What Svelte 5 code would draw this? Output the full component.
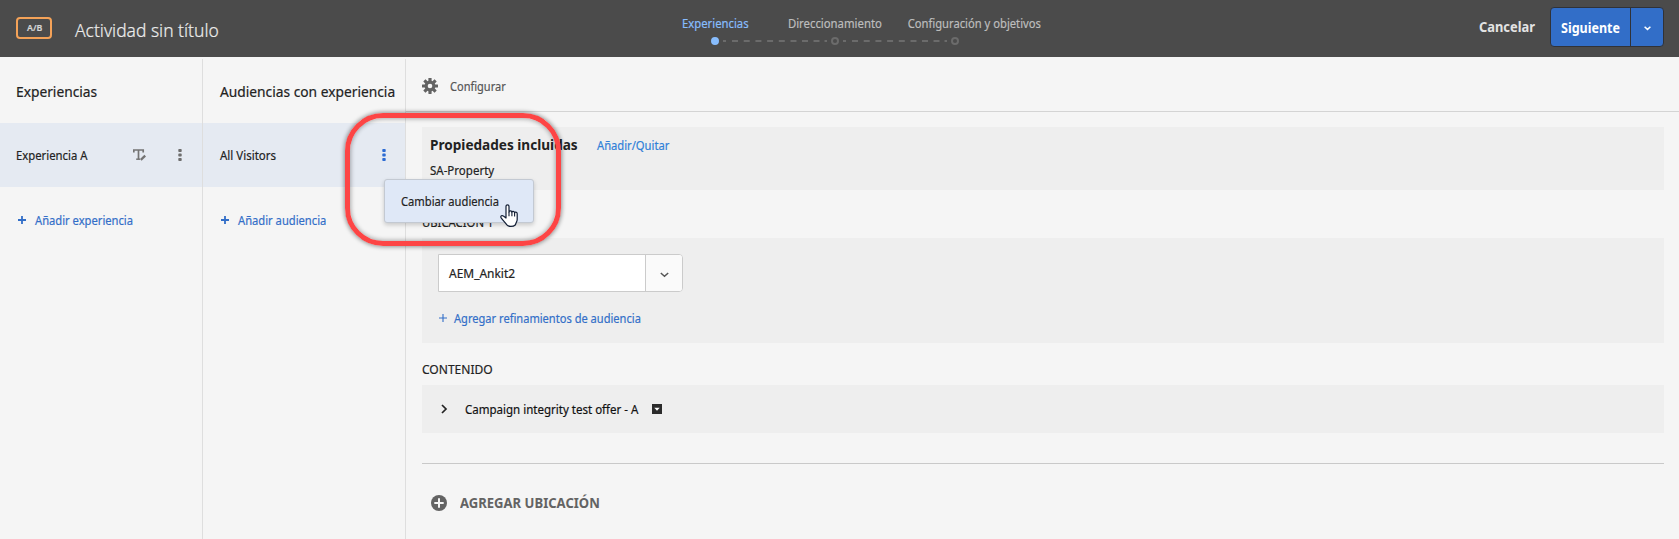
<script>
  const steps = [
    { label: 'Experiencias', k: 0.868, active: true },
    { label: 'Direccionamiento', k: 0.872 },
    { label: 'Configuración y objetivos', k: 0.862, wide: true }
  ];
</script>

{#snippet t(text, k)}<span class="t" style="transform: scaleX({k})">{text}</span>{/snippet}

{#snippet dots()}
  <svg class="dots" width="4" height="12" viewBox="0 0 4 12" fill="currentColor">
    <rect x=".3" y="0" width="3.4" height="3" rx=".8" /><rect x=".3" y="4.6" width="3.4" height="3" rx=".8" /><rect x=".3" y="9" width="3.4" height="3" rx=".8" />
  </svg>
{/snippet}

{#snippet plus(w)}
  <svg class="plus" width="8" height="8" viewBox="0 0 8 8" stroke="currentColor" stroke-width={w}><path d="M4 0v8M0 4h8" /></svg>
{/snippet}

<div class="page">
  <header>
    <div class="badge">{@render t('A/B', 0.98)}</div>
    <h1>{@render t('Actividad sin título', 0.918)}</h1>
    <ol>
      {#each steps as s}
        <li class:active={s.active} class:wide={s.wide}>
          <div class="label">{@render t(s.label, s.k)}</div>
          <i></i>
          {#if !s.wide}
            <svg class="dash" width="104" height="2"><path d="M0 1h3M9 1h6M20.700 1h6M32.400 1h6M44.100 1h6M55.800 1h6M67.500 1h6M79 1h6M90.500 1h6M101.500 1h2.500" stroke="#6b6b6b" stroke-width="2" /></svg>
          {/if}
        </li>
      {/each}
    </ol>
    <div class="cancel">{@render t('Cancelar', 0.92)}</div>
    <div class="next">
      <div class="go">{@render t('Siguiente', 0.895)}</div>
      <div class="more"><svg width="7" height="5" viewBox="0 0 7 5" fill="none" stroke="#fff" stroke-width="1.500"><path d="M.6.7 3.500 3.400 6.400.7" /></svg></div>
    </div>
  </header>

  <div class="body">
    <section class="col">
      <h2>{@render t('Experiencias', 0.918)}</h2>
      <div class="row">
        {@render t('Experiencia A', 0.87)}
        <svg class="rename" width="14" height="12" viewBox="0 0 14 12" fill="none" stroke="#747474">
          <path d="M.8 3.400V1h9.400v2.400M5.500 1v9.200" stroke-width="1.700" /><path d="M3.200 10.200h3.800" stroke-width="1.500" /><path d="m7.800 10.800 4.400-4.200" stroke-width="2.300" />
        </svg>
        {@render dots()}
      </div>
      <div class="add">{@render plus(1.8)}{@render t('Añadir experiencia', 0.86)}</div>
    </section>

    <section class="col second">
      <h2>{@render t('Audiencias con experiencia', 0.918)}</h2>
      <div class="row open">
        {@render t('All Visitors', 0.885)}
        {@render dots()}
      </div>
      <div class="add">{@render plus(1.8)}{@render t('Añadir audiencia', 0.86)}</div>
    </section>

    <main>
      <div class="toolbar">
        <svg width="16" height="16" viewBox="-8 -8 16 16">
          <g fill="#636363">
            {#each [0, 45, 90, 135] as a}<rect x="-1.600" y="-8" width="3.200" height="16" rx=".4" transform="rotate({a})" />{/each}
            <circle r="5.400" />
          </g>
          <circle r="2.300" fill="#f5f5f5" />
        </svg>
        {@render t('Configurar', 0.848)}
      </div>
      <div class="content">
        <div class="panel props">
          <div class="ptitle"><b>{@render t('Propiedades incluidas', 0.906)}</b><a>{@render t('Añadir/Quitar', 0.86)}</a></div>
          <div class="pname">{@render t('SA-Property', 0.885)}</div>
        </div>
        <h3 class="loc">{@render t('UBICACIÓN 1', 0.87)}</h3>
        <div class="panel location">
          <div class="select">
            <div class="value">{@render t('AEM_Ankit2', 0.92)}</div>
            <div class="arrow"><svg width="9" height="6" viewBox="0 0 9 6" fill="none" stroke="#555" stroke-width="1.500"><path d="M.8 1 4.500 4.200 8.200 1" /></svg></div>
          </div>
          <div class="refine">{@render plus(1.1)}{@render t('Agregar refinamientos de audiencia', 0.853)}</div>
        </div>
        <h3 class="cont">{@render t('CONTENIDO', 0.925)}</h3>
        <div class="panel offer">
          <svg width="7" height="10" viewBox="0 0 7 10" fill="none" stroke="#222" stroke-width="1.700"><path d="m1 1 4 4-4 4" /></svg>
          <span class="name">{@render t('Campaign integrity test offer - A', 0.886)}</span>
          <svg width="10" height="10" viewBox="0 0 10 10"><path fill="#2b2b2b" d="M0 0h10v10H0z" /><path fill="#fff" d="M2.300 3.800h5.400L5 6.700z" /></svg>
        </div>
        <hr />
        <div class="addloc">
          <svg width="16" height="16" viewBox="0 0 16 16"><circle cx="8" cy="8" r="8" fill="#636363" /><path d="M8 3.300v9.400M3.300 8h9.400" stroke="#f5f5f5" stroke-width="2" /></svg>
          {@render t('AGREGAR UBICACIÓN', 0.933)}
        </div>
      </div>
    </main>
  </div>

  <div class="menu">{@render t('Cambiar audiencia', 0.86)}</div>
  <div class="ring"></div>
  <svg class="cursor" width="18" height="24" viewBox="0 0 18 24">
    <path d="M6 14V2.500C6 .2 9 .2 9 2.500V8c0-1.500 2.900-1.400 2.900.4 0-1.500 2.700-1.300 2.700.5 0-1.300 2.600-1 2.600.8v5.800c0 2-1.400 3.500-1.700 5.200-2.500 2.400-7 2.200-8.600.2C5.600 18.800 3 16.500 1 13.600c-.7-1.600 1-2.600 2.400-1.500z" fill="#fff" stroke="#111d33" stroke-width="1.200" stroke-linejoin="round" />
    <path d="M9 8v4.300M11.900 8.500v3.800M14.600 9v3.500" stroke="#111d33" stroke-width="1.100" />
  </svg>
</div>

<style>
  :global(body) { background: #f5f5f5; }
  .page { position: relative; width: 1679px; height: 539px; overflow: hidden; display: flex; flex-direction: column; background: #f5f5f5; color: #222; font: 13px/20px 'Noto Sans', sans-serif; }
  .t { display: inline-block; flex: none; transform-origin: 0 50%; white-space: nowrap; -webkit-text-stroke: 0.2px currentColor; }
  h1, h2, h3, ol { margin: 0; padding: 0; font-weight: 400; }
  svg { display: block; flex: none; }

  header { display: flex; height: 57px; flex: none; background: #4b4b4b; color: #d6d6d6; }
  .badge { box-sizing: border-box; width: 36px; height: 22px; margin: 17px 23px 0 16px; border: 2px solid #f4a258; border-radius: 4px; padding-left: 9px; font-size: 9px; font-weight: 600; line-height: 18px; }
  h1 { width: 580px; padding-top: 16px; font-size: 19px; font-weight: 300; line-height: 29px; color: #ececec; }
  ol { display: flex; width: 816px; padding-top: 13px; list-style: none; color: #bdbdbd; }
  li { position: relative; width: 120px; }
  .label { display: flex; justify-content: center; line-height: 20px; }
  .label .t { transform-origin: 50% 50%; }
  .wide .label { margin: 0 -36px 0 2px; }
  .active .label { color: #88bdfd; }
  i { display: block; box-sizing: border-box; width: 8px; height: 8px; margin: 4px auto 0; border: 2px solid #6b6b6b; border-radius: 50%; }
  .active i { background: #88bdfd; border-color: #88bdfd; }
  .dash { position: absolute; left: 68px; top: 27px; }
  .cancel { width: 71px; padding-top: 17px; font-size: 14px; font-weight: 700; margin-left: 8px; color: #e3e3e3; }
  .next { box-sizing: border-box; display: flex; width: 114px; height: 40px; margin-top: 7px; border: 1px solid #303238; border-radius: 4px; background: #326ec8; color: #fff; overflow: hidden; }
  .go { width: 69px; padding: 10px 0 0 10px; font-size: 14px; font-weight: 700; border-right: 1px solid #303238; }
  .cancel .t, .go .t, b .t, .addloc .t { -webkit-text-stroke: 0; }
  .more { flex: 1; display: flex; justify-content: center; align-items: center; padding-top: 2px; }

  .body { flex: 1; display: flex; }
  .col { box-sizing: border-box; width: 203px; margin-top: 2px; border-right: 1px solid #dedede; }
  h2 { height: 64px; padding-left: 16px; font-size: 15px; line-height: 65px; }
  .second h2 .t { margin-left: 0.5px; }
  .row { display: flex; align-items: center; height: 64px; padding-left: 16px; background: #e5eaf2; }
  .row > .t { width: 117px; }
  .row .rename { margin-right: 31px; }
  .row .dots { color: #6e6e6e; }
  .open > .t { width: 162px; margin-left: 0.5px; }
  .open .dots { color: #2d6cd3; }
  .add { display: flex; align-items: center; gap: 9px; padding: 23px 0 0 18px; color: #326ec8; }

  main { flex: 1; }
  .toolbar { box-sizing: border-box; display: flex; align-items: center; gap: 12px; height: 55px; padding: 4px 0 0 16px; border-bottom: 1px solid #d4d4d4; color: #555; }
  .content { padding: 15px 15px 0 16px; }
  .panel { background: #eee; box-sizing: border-box; }
  .props { height: 63px; padding: 7px 0 0 8px; }
  .ptitle { display: flex; height: 26px; }
  .ptitle b { width: 167px; font-size: 15px; }
  .ptitle a { color: #2f80d8; padding-top: 1px; }
  h3 { font-size: 13px; }
  .loc { height: 48px; line-height: 65px; }
  .location { height: 105px; padding: 16px; }
  .select { box-sizing: border-box; display: flex; width: 245px; height: 38px; border: 1px solid #cbcbcb; border-radius: 0 4px 4px 0; background: #fff; overflow: hidden; }
  .value { width: 196px; padding-left: 10px; line-height: 36px; border-right: 1px solid #cbcbcb; }
  .arrow { flex: 1; display: flex; align-items: center; justify-content: center; padding-top: 3px; background: #fafafa; }
  .refine { display: flex; align-items: center; gap: 7px; padding: 16px 0 0 1px; color: #326ec8; }
  .cont { height: 42px; line-height: 52px; }
  .offer { display: flex; align-items: center; height: 48px; padding-left: 19px; color: #111; }
  .name { width: 187px; margin-left: 17px; }
  hr { height: 1px; margin: 30px 0 29px; border: 0; background: #c9c9c9; }
  .addloc { display: flex; align-items: center; gap: 13px; padding-left: 9px; font-size: 14px; font-weight: 700; color: #636363; }

  .menu { position: absolute; left: 384px; top: 179px; box-sizing: border-box; width: 150px; height: 44px; padding-left: 16px; line-height: 42px; border: 1px solid #c3c9d2; border-radius: 3px; background: #dfe8f7; box-shadow: 0 2px 4px rgba(0, 0, 0, 0.18); }
  .ring { position: absolute; left: 345px; top: 113px; box-sizing: border-box; width: 216px; height: 133px; border: 5px solid #fd4545; border-radius: 38px; box-shadow: 0 0 4px 1px rgba(0, 0, 0, 0.4), inset 0 0 4px 1px rgba(0, 0, 0, 0.3); }
  .cursor { position: absolute; left: 500px; top: 204px; }
</style>
